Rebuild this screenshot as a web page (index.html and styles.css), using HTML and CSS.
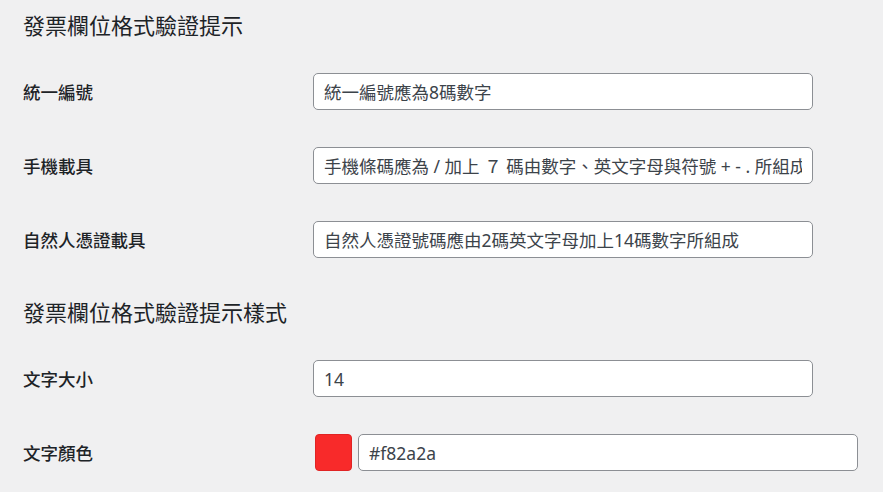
FILE: index.html
```html
<!DOCTYPE html>
<html lang="zh-Hant">
	<head>
		<meta charset="utf-8">
		<title>發票欄位格式驗證提示</title>
		<link rel="stylesheet" href="styles.css">
	</head>
	<body>
		<div class="wrap">
			<h2 class="section-title">發票欄位格式驗證提示</h2>
			<div class="form-table">
				<div class="row">
					<label class="row-label" for="msg-ubn">統一編號</label>
					<input class="regular-text" id="msg-ubn" type="text" value="統一編號應為8碼數字">
				</div>
				<div class="row">
					<label class="row-label" for="msg-mobile">手機載具</label>
					<input class="regular-text" id="msg-mobile" type="text" value="手機條碼應為 / 加上 ７ 碼由數字、英文字母與符號 + - . 所組成">
				</div>
				<div class="row">
					<label class="row-label" for="msg-cert">自然人憑證載具</label>
					<input class="regular-text" id="msg-cert" type="text" value="自然人憑證號碼應由2碼英文字母加上14碼數字所組成">
				</div>
			</div>

			<h2 class="section-title section-title--next">發票欄位格式驗證提示樣式</h2>
			<div class="form-table">
				<div class="row">
					<label class="row-label" for="msg-size">文字大小</label>
					<input class="regular-text" id="msg-size" type="text" value="14">
				</div>
				<div class="row">
					<label class="row-label" for="msg-color">文字顏色</label>
					<div class="color-field">
						<span class="color-swatch"></span>
						<input class="regular-text" id="msg-color" type="text" value="#f82a2a">
					</div>
				</div>
			</div>
		</div>
	</body>
</html>
```

FILE: styles.css
```css
*{margin: 0;padding: 0;box-sizing: border-box;}
html,
body{width: 100%;height: 100%;overflow: hidden;}
body{background-color: #f0f0f1;color: #1d2327;
	font-family: "Segoe UI", "Noto Sans", "Noto Sans CJK TC", sans-serif;}

.wrap{padding-left: 23px;}

/* 區塊標題 */
.section-title{font-size: 22px;font-weight: 400;line-height: 30px;padding-top: 10px;margin-bottom: 14.5px;}
.section-title--next{padding-top: 0;margin-top: 20.5px;}

/* 表單列 */
.row{display: flex;align-items: center;padding: 18.5px 0;}
.row-label{width: 290px;flex-shrink: 0;font-size: 17.5px;font-weight: 500;}

.regular-text{width: 500px;height: 37px;padding: 0 10px;border: 1px solid #8c8f94;border-radius: 5px;
	background-color: #fff;color: #3c434a;font-family: inherit;font-size: 17.5px;outline: none;}

/* 顏色選擇 */
.color-field{display: flex;align-items: center;gap: 6px;padding-left: 2px;}
.color-swatch{display: block;width: 37px;height: 37px;background-color: #f82a2a;
	border: 1px solid #e02424;border-radius: 4px;}
```
